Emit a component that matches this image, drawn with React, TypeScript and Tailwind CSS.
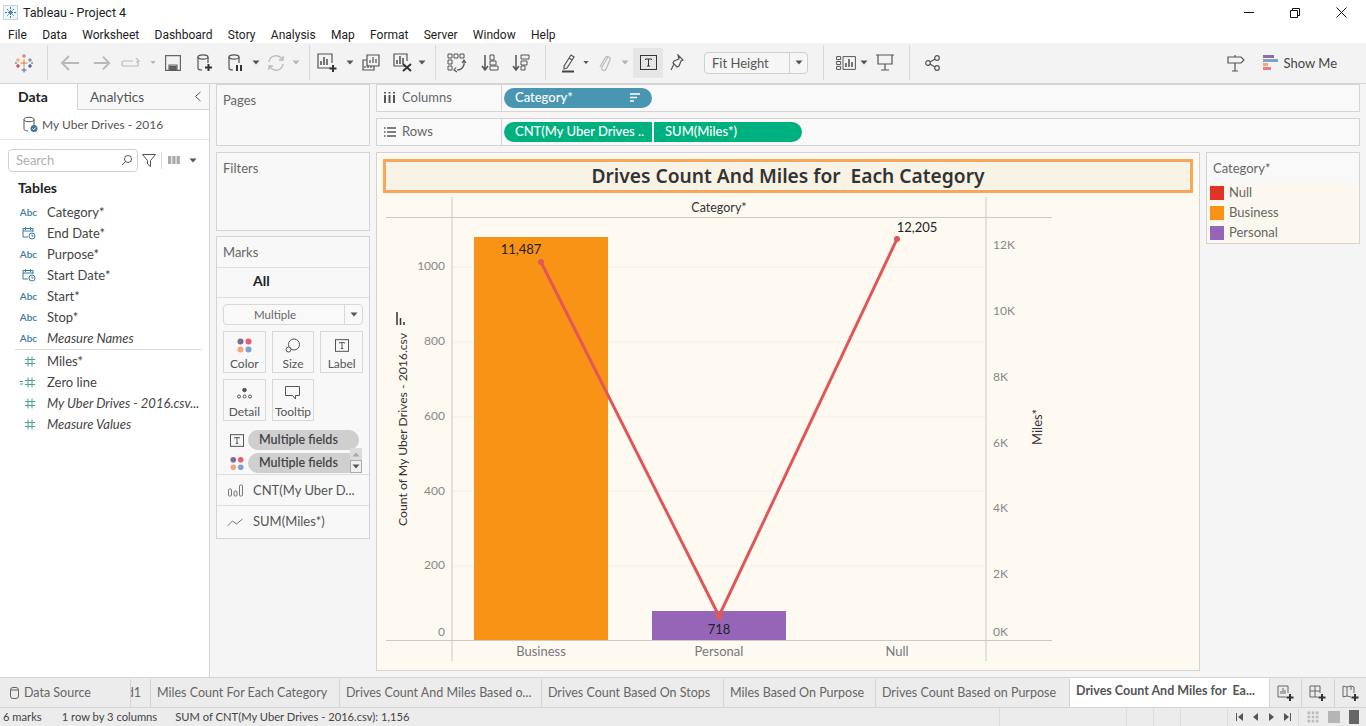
import type { ReactNode } from "react";

// Small drop-down arrow used after many toolbar buttons.
function Caret({ light }: { light?: boolean }) {
  return (
    <svg width="8" height="5" viewBox="0 0 8 5">
      <path d="M0.5 0.5h7L4 4.5z" fill={light ? "#b5b5b5" : "#555"} />
    </svg>
  );
}

function Tool({ w, children }: { w: string; children: ReactNode }) {
  return <div className={`${w} flex h-full shrink-0 items-center justify-center`}>{children}</div>;
}

function Sep({ className = "" }: { className?: string }) {
  return <div className={`h-[35px] w-px shrink-0 bg-[#d8d8d8] ${className}`} />;
}

function Icon({ w = 22, h = 22, children }: { w?: number; h?: number; children: ReactNode }) {
  return (
    <svg width={w} height={h} viewBox={`0 0 ${w} ${h}`} fill="none" stroke="#555" strokeWidth="1.2">
      {children}
    </svg>
  );
}

function TableauLogo() {
  const crosses: [number, number, string, number][] = [
    [10, 10, "#e8762c", 3.5],
    [10, 3, "#e15759", 2],
    [10, 17, "#5b6591", 2.5],
    [4, 7, "#eda247", 2],
    [16, 7, "#59879b", 2],
    [4, 13, "#c72037", 2],
    [16, 13, "#1f447e", 2],
    [2, 10, "#7099a6", 1.2],
    [18, 10, "#7099a6", 1.2],
  ];
  return (
    <svg width="20" height="20" viewBox="0 0 20 20" strokeWidth="1">
      {crosses.map(([x, y, c, r]) => (
        <path key={`${x}-${y}`} d={`M${x - r} ${y}h${2 * r}M${x} ${y - r}v${2 * r}`} stroke={c} fill="none" />
      ))}
    </svg>
  );
}

function Toolbar() {
  return (
    <div className="flex h-[41px] items-center border-b border-[#d4d4d4] bg-[#f3f3f3]">
      <Tool w="w-[47px]"><TableauLogo /></Tool>
      <Sep />
      <Tool w="w-[44px]">
        <Icon><path d="M20 11H3M10 4l-7 7 7 7" stroke="#b9b9b9" strokeWidth="2" /></Icon>
      </Tool>
      <Tool w="w-[20px]">
        <Icon><path d="M2 11h17M12 4l7 7-7 7" stroke="#b9b9b9" strokeWidth="2" /></Icon>
      </Tool>
      <Tool w="w-[38px]">
        <Icon w={20} h={12}>
          <path d="M12 4H3a2 2 0 0 0-2 2v1a2 2 0 0 0 2 2h14V5M15 1l3 3-3 1" stroke="#bbb" />
        </Icon>
      </Tool>
      <Tool w="w-[6px]"><Caret light /></Tool>
      <Tool w="w-[34px]">
        <Icon w={16} h={16}>
          <path d="M0.6 0.6h14.8v14.8H0.6zM4 15v-5h8v5" stroke="#666" />
          <rect x="5" y="11.5" width="6" height="3.5" fill="#666" />
        </Icon>
      </Tool>
      <Tool w="w-[30px]">
        <Icon w={16} h={18}>
          <ellipse cx="6" cy="3" rx="5" ry="2.2" />
          <path d="M1 3v11c0 1.2 2 2 4 2M11 3v6" />
          <path d="M11.5 10v7M8 13.5h7" stroke="#333" strokeWidth="2" />
        </Icon>
      </Tool>
      <Tool w="w-[32px]">
        <Icon w={16} h={18}>
          <ellipse cx="6" cy="3" rx="5" ry="2.2" />
          <path d="M1 3v11c0 1.2 2 2 4 2M11 3v6" />
          <path d="M9 11v6M13 11v6" stroke="#333" strokeWidth="2" />
        </Icon>
      </Tool>
      <Tool w="w-[8px]"><Caret /></Tool>
      <Tool w="w-[32px]">
        <Icon w={18} h={18}>
          <path d="M2 8a7 7 0 0 1 12-4l2 2M16 10a7 7 0 0 1-12 4l-2-2M16 2v4h-4M2 16v-4h4" stroke="#bcbcbc" strokeWidth="1.4" />
        </Icon>
      </Tool>
      <Tool w="w-[8px]"><Caret light /></Tool>
      <Sep className="ml-[9px]" />
      <Tool w="w-[36px]">
        <Icon w={22} h={20}>
          <path d="M14 15H1V1h14v9" />
          <path d="M4 12V8M7 12V4M10 12V6" strokeWidth="1.6" />
          <path d="M16 12v7M12.5 15.5h7" stroke="#333" strokeWidth="2" />
        </Icon>
      </Tool>
      <Tool w="w-[8px]"><Caret /></Tool>
      <Tool w="w-[34px]">
        <Icon w={18} h={17}>
          <path d="M5 1h12v11H5z" />
          <path d="M8 9V6M11 9V3M14 9V5" />
          <path d="M5 6H1v10h11v-4M3 14v-2M6 14v-3M9 14v-2" />
        </Icon>
      </Tool>
      <Tool w="w-[30px]">
        <Icon w={20} h={19}>
          <path d="M12 13H1V1h13v7" />
          <path d="M4 11V7M7 11V3M10 11V5" strokeWidth="1.6" />
          <path d="M10 11l8 7M18 11l-8 7" stroke="#333" strokeWidth="2" />
        </Icon>
      </Tool>
      <Tool w="w-[8px]"><Caret /></Tool>
      <Sep className="ml-[9px]" />
      <Tool w="w-[42px]">
        <Icon w={20} h={20}>
          <path d="M1 1h4v4H1zM7 1h4v4H7zM13 1h4v4h-4zM1 7h4v4H1zM1 13h4v4H1z" strokeWidth="1" />
          <path d="M17 8c1 5-2 9-7 9M9 14.5l-2 2.5 3 2M15 10l2-3 2 3" />
        </Icon>
      </Tool>
      <Tool w="w-[24px]">
        <Icon w={18} h={18}>
          <path d="M4 1v14M1 12l3 4 3-4" strokeWidth="1.5" />
          <path d="M9 1h4v5H9zM9 7h6v4H9zM9 12h8v4H9z" strokeWidth="1" />
        </Icon>
      </Tool>
      <Tool w="w-[38px]">
        <Icon w={18} h={18}>
          <path d="M4 1v14M1 12l3 4 3-4" strokeWidth="1.5" />
          <path d="M9 1h8v4H9zM9 7h6v4H9zM9 12h4v4H9z" strokeWidth="1" />
        </Icon>
      </Tool>
      <Sep className="ml-[5px]" />
      <Tool w="w-[30px] ml-[7px]">
        <Icon w={14} h={20}>
          <path d="M3 13L10 2l3 2-7 11-3 1zM8 5l3 2" />
          <path d="M1 18.5h12" stroke="#444" strokeWidth="2" />
        </Icon>
      </Tool>
      <Tool w="w-[6px]"><Caret /></Tool>
      <Tool w="w-[32px]">
        <Icon w={14} h={19}>
          <path d="M10 4L4 14c-2 3 3 5 4 2l4-9c1-3-3-5-5-2L2 14" stroke="#bcbcbc" strokeWidth="1.3" />
        </Icon>
      </Tool>
      <Tool w="w-[8px]"><Caret light /></Tool>
      <div className="ml-[4px] flex h-[30px] w-[30px] shrink-0 items-center justify-center bg-[#e6e6e6]">
        <TextBox w={17} h={15} />
      </div>
      <Tool w="w-[28px]">
        <Icon w={14} h={17}>
          <path d="M8 1l5 5-2 1-2 5-2 1-4-4 1-2 5-2zM4 10l-3 6" />
        </Icon>
      </Tool>
      <div className="ml-[13px] flex h-[22px] w-[104px] shrink-0 rounded-sm border border-[#cfcfcf] bg-[#f6f6f6] text-[13px] text-[#555]">
        <span className="flex-1 pl-[7px] leading-[20px]">Fit Height</span>
        <span className="flex w-[18px] items-center justify-center border-l border-[#cfcfcf]"><Caret /></span>
      </div>
      <Sep className="ml-[15px]" />
      <Tool w="w-[28px] ml-[8px]">
        <Icon w={20} h={14}>
          <path d="M0.6 0.6h4v3h-4zM0.6 5.5h4v3h-4zM0.6 10.4h4v3h-4zM7 0.6h12.4v12.8H7z" strokeWidth="1" />
          <path d="M10 11V7M13 11V3M16 11V6" strokeWidth="1.6" />
        </Icon>
      </Tool>
      <Tool w="w-[8px]"><Caret /></Tool>
      <Tool w="w-[34px]">
        <Icon w={18} h={17}>
          <path d="M0 1h18M2 1v9h14V1M9 10v6M5 16h8" />
        </Icon>
      </Tool>
      <Sep className="ml-[7px]" />
      <Tool w="w-[44px]">
        <Icon w={15} h={16}>
          <circle cx="3" cy="8" r="2.3" />
          <circle cx="12" cy="3" r="2.3" />
          <circle cx="12" cy="13" r="2.3" />
          <path d="M5 7l5-3M5 9l5 3" />
        </Icon>
      </Tool>
      <div className="flex-1" />
      <Tool w="w-[30px]">
        <Icon w={18} h={18}>
          <path d="M1 3h13l3 3-3 3H1zM8 3V1M8 9v8M5 17h6" />
        </Icon>
      </Tool>
      <div className="ml-[12px] mr-[29px] flex shrink-0 items-center gap-[6px] text-[13px] text-[#444]">
        <svg width="15" height="15" viewBox="0 0 15 15">
          <rect x="0" y="0" width="11" height="3" fill="#8b6f9e" />
          <rect x="0" y="4" width="15" height="3" fill="#7ea2d0" />
          <rect x="0" y="8" width="5" height="3" fill="#f2a96b" />
          <rect x="0" y="12" width="8" height="3" fill="#f0788a" />
        </svg>
        <span className="pt-[1px]">Show Me</span>
      </div>
    </div>
  );
}

function TextBox({ w, h }: { w: number; h: number }) {
  return (
    <svg width={w} height={h} viewBox="0 0 17 15" fill="none" stroke="#333" strokeWidth="1">
      <rect x="0.5" y="0.5" width="16" height="14" />
      <path d="M5.5 5V4h6v1M8.5 4v7M7 11h3" />
    </svg>
  );
}

function ColorDots() {
  return (
    <svg width="15" height="15" viewBox="0 0 15 15">
      <circle cx="3.5" cy="3.5" r="3" fill="#7b6a94" />
      <circle cx="11.5" cy="3.5" r="3" fill="#ea5d6e" />
      <circle cx="3.5" cy="11.5" r="3" fill="#f2a774" />
      <circle cx="11.5" cy="11.5" r="3" fill="#7ea2d0" />
    </svg>
  );
}

type FieldKind = "abc" | "date" | "num" | "calc";

function FieldIcon({ kind }: { kind: FieldKind }) {
  if (kind === "abc") return <span className="text-[10px] font-semibold text-[#3a7a9c]">Abc</span>;
  if (kind === "date") {
    return (
      <svg width="14" height="14" viewBox="0 0 14 14" fill="none" stroke="#3a7a9c" strokeWidth="1">
        <path d="M6 11H1V2.5h10V6M3.5 1v3M8.5 1v3M1 5h10" />
        <circle cx="10" cy="10" r="3" />
        <path d="M10 8.5V10h1.4" />
      </svg>
    );
  }
  return (
    <svg width="17" height="11" viewBox="0 0 17 11" fill="none" stroke="#46a67e" strokeWidth="1">
      {kind === "calc" && <path d="M0 4.5h3M0 7h3" />}
      <path d="M8 0.5v10M12 0.5v10M5 3.5h10M5 7.5h10" />
    </svg>
  );
}

const FIELDS: { name: string; kind: FieldKind; italic?: boolean }[] = [
  { name: "Category*", kind: "abc" },
  { name: "End Date*", kind: "date" },
  { name: "Purpose*", kind: "abc" },
  { name: "Start Date*", kind: "date" },
  { name: "Start*", kind: "abc" },
  { name: "Stop*", kind: "abc" },
  { name: "Measure Names", kind: "abc", italic: true },
  { name: "Miles*", kind: "num" },
  { name: "Zero line", kind: "calc" },
  { name: "My Uber Drives - 2016.csv...", kind: "num", italic: true },
  { name: "Measure Values", kind: "num", italic: true },
];

function DataPane() {
  return (
    <div className="flex w-[210px] shrink-0 flex-col border-r border-[#d4d4d4] bg-white">
      <div className="flex h-[26px] items-stretch">
        <div className="flex w-[77px] items-center pl-[18px] text-[14px] font-bold text-[#222]">Data</div>
        <div className="flex flex-1 items-center justify-between border-b border-l border-[#d4d4d4] bg-[#f8f8f8] pl-[12px] pr-[7px] pt-[1px] text-[13.5px] text-[#555]">
          Analytics
          <svg width="8" height="11" viewBox="0 0 8 11" fill="none" stroke="#555"><path d="M6.5 1L1.5 5.5l5 4.5" /></svg>
        </div>
      </div>
      <div className="flex h-[30px] items-center gap-[3px] border-b border-[#e4e4e4] pl-[22px] pt-[1px] text-[12px] text-[#555]">
        <svg width="17" height="17" viewBox="0 0 17 17" fill="none" stroke="#555">
          <ellipse cx="7" cy="3.5" rx="5" ry="2.2" />
          <path d="M2 3.5V13c0 1.2 2 2 4 2M12 3.500v6" />
          <circle cx="12" cy="12.5" r="3.5" fill="#3a7a9c" stroke="none" />
          <path d="M10.5 12.5l1.2 1.2 2-2.2" stroke="#fff" />
        </svg>
        My Uber Drives - 2016
      </div>
      <div className="flex items-center pl-[8px] pt-[9px]">
        <div className="flex h-[23px] w-[130px] items-center justify-between rounded-sm border border-[#cfcfcf] pl-[7px] pr-[4px] text-[13px] text-[#b0b0b0]">
          Search
          <svg width="12" height="12" viewBox="0 0 12 12" fill="none" stroke="#555"><circle cx="7" cy="5" r="3.5" /><path d="M4.500 7.5L1 11" /></svg>
        </div>
        <svg className="ml-[4px]" width="14" height="13" viewBox="0 0 14 13" fill="none" stroke="#555"><path d="M0.5 0.5h13L8.5 6.500v6l-3-2.500V6.500z" /></svg>
        <div className="ml-[5px] h-[17px] w-px bg-[#d8d8d8]" />
        <svg className="ml-[6px]" width="12" height="9" viewBox="0 0 12 9" stroke="#555" strokeDasharray="3.3 1"><path d="M0 1h12M0 3h12M0 5h12M0 7h12" /></svg>
        <span className="ml-[9px]"><Caret /></span>
      </div>
      <div className="pl-[18px] pt-[5px] text-[14px] font-bold leading-[22px] text-[#222]">Tables</div>
      <div className="mt-[3px] flex flex-col">
        {FIELDS.map((field, i) => (
          <div key={field.name}>
            {i === 7 && <div className="mb-px ml-[15px] mr-[7px] h-px bg-[#dcdcdc]" />}
            <div className="flex h-[21px] items-center text-[13px] text-[#444]">
              <span className="flex w-[47px] shrink-0 justify-center pl-[16px] pr-[6px]"><FieldIcon kind={field.kind} /></span>
              <span className={`whitespace-nowrap ${field.italic ? "italic" : ""}`}>{field.name}</span>
            </div>
          </div>
        ))}
      </div>
    </div>
  );
}

function MarkButton({ label, children }: { label: string; children: ReactNode }) {
  return (
    <div className="flex h-[42px] flex-col items-center justify-between border border-[#d8d8d8] pb-[1px] pt-[5px] text-[12px] leading-[15px] text-[#555]">
      <div className="flex h-[16px] items-center">{children}</div>
      {label}
    </div>
  );
}

function Card({ title, className }: { title: string; className: string }) {
  return (
    <div className={`border border-[#d4d4d4] bg-[#f8f8f8] pl-[6px] pt-[7px] text-[13px] leading-[16px] text-[#666] ${className}`}>
      {title}
    </div>
  );
}

function CardsColumn() {
  return (
    <div className="flex w-[154px] shrink-0 flex-col gap-[5px]">
      <Card title="Pages" className="h-[62px]" />
      <Card title="Filters" className="mt-px h-[79px]" />
      <div className="flex h-[303px] flex-col border border-[#d4d4d4] bg-[#f8f8f8]">
        <div className="h-[31px] border-b border-[#dedede] pl-[6px] pt-[7px] text-[13px] leading-[16px] text-[#666]">Marks</div>
        <div className="flex h-[31px] items-center border-b border-[#dedede] pb-[4px] pl-[36px] text-[14px] font-bold text-[#222]">All</div>
        <div className="mx-[6px] mt-[6px] flex h-[21px] rounded-sm border border-[#d8d8d8] bg-[#f9f9f9] text-[11.5px] text-[#666]">
          <span className="flex-1 pl-[30px] leading-[19px]">Multiple</span>
          <span className="flex w-[18px] items-center justify-center border-l border-[#d8d8d8]"><Caret /></span>
        </div>
        <div className="mx-[6px] mt-[6px] grid grid-cols-3 gap-x-[6px] gap-y-[6px]">
          <MarkButton label="Color"><ColorDots /></MarkButton>
          <MarkButton label="Size">
            <svg width="16" height="15" viewBox="0 0 16 15" fill="none" stroke="#555"><circle cx="9" cy="6.5" r="5.5" /><circle cx="3.5" cy="11.5" r="2.5" fill="#f8f8f8" /></svg>
          </MarkButton>
          <MarkButton label="Label"><TextBox w={14} h={13} /></MarkButton>
          <MarkButton label="Detail">
            <svg width="15" height="11" viewBox="0 0 15 11" fill="none" stroke="#555">
              <circle cx="7.5" cy="2" r="1.8" fill="#555" />
              <circle cx="2" cy="8.5" r="1.5" />
              <circle cx="7.5" cy="8.5" r="1.5" />
              <circle cx="13" cy="8.5" r="1.5" />
            </svg>
          </MarkButton>
          <MarkButton label="Tooltip">
            <svg width="15" height="14" viewBox="0 0 15 14" fill="none" stroke="#555"><path d="M0.5 0.5h14v9h-4v3.5l-3-3.5h-7z" /></svg>
          </MarkButton>
        </div>
        <div className="relative mt-[9px] flex flex-col gap-[3px] pl-[13px]">
          <div className="flex items-center gap-[4px]">
            <span className="flex w-[14px] justify-center"><TextBox w={14} h={13} /></span>
            <span className="h-[20px] w-[111px] rounded-full bg-[#cfcfcf] pl-[11px] text-[12.5px] font-semibold leading-[20px] text-[#444]">Multiple fields</span>
          </div>
          <div className="flex items-center gap-[4px]">
            <span className="flex w-[14px] justify-center"><ColorDots /></span>
            <span className="h-[20px] w-[111px] rounded-full bg-[#cfcfcf] pl-[11px] text-[12.5px] font-semibold leading-[20px] text-[#444]">Multiple fields</span>
          </div>
          {/* tiny scroller sits over the pills */}
          <div className="absolute right-[7px] top-[18px] flex h-[25px] w-[12px] flex-col bg-[#dcdcdc]">
            <span className="flex h-[12px] items-center justify-center">
              <svg width="8" height="5" viewBox="0 0 8 5"><path d="M0.5 4.5h7L4 0.5z" fill="#aaa" /></svg>
            </span>
            <span className="flex h-[13px] items-center justify-center border border-[#aaa] bg-[#f0f0f0]"><Caret /></span>
          </div>
        </div>
        <div className="mt-[1px] flex h-[32px] items-center border-b border-t border-[#dedede] text-[13px] text-[#555]">
          <span className="flex w-[36px] justify-center">
            <svg width="15" height="13" viewBox="0 0 15 13" fill="none" stroke="#777"><rect x="0.5" y="5" width="3" height="7" rx="1" /><rect x="6" y="7" width="3" height="5" rx="1" /><rect x="11.5" y="1" width="3" height="11" rx="1" /></svg>
          </span>
          CNT(My Uber D...
        </div>
        <div className="flex h-[32px] items-center text-[13px] text-[#555]">
          <span className="flex w-[36px] justify-center">
            <svg width="16" height="9" viewBox="0 0 16 9" fill="none" stroke="#777"><path d="M0.5 8l5-5 4 3 6-5" /></svg>
          </span>
          SUM(Miles*)
        </div>
      </div>
    </div>
  );
}

function Shelf({ label, icon, children }: { label: string; icon: ReactNode; children: ReactNode }) {
  return (
    <div className="flex h-[28px] border border-[#d4d4d4] bg-[#f9f9f9]">
      <div className="flex w-[125px] shrink-0 items-center gap-[6px] border-r border-[#d4d4d4] pl-[6px] text-[13px] text-[#666]">
        <span className="flex w-[13px] justify-center">{icon}</span>
        {label}
      </div>
      <div className="flex items-center gap-[2px] pl-[2px] text-[13px] font-medium text-white">{children}</div>
    </div>
  );
}

function Chart() {
  const left: [string, number][] = [["1000", 270], ["800", 345], ["600", 420], ["400", 495], ["200", 569], ["0", 636]];
  const right: [string, number][] = [["12K", 249], ["10K", 315], ["8K", 381], ["6K", 447], ["4K", 512], ["2K", 578], ["0K", 636]];
  return (
    <svg width="822" height="477" viewBox="377 193 822 477" className="block text-[12px]">
      {[267, 342, 417, 491, 566].map((y) => (
        <path key={y} d={`M452 ${y}H986`} stroke="#f4efe8" />
      ))}
      <rect x="474" y="237" width="134" height="403" fill="#f99316" />
      <rect x="652" y="611" width="134" height="29" fill="#9566b8" />
      <path d="M452 197V661M986 197V661M386 217.5H1052M386 640.5H1052" stroke="#cdc9c3" />
      <path d="M541 262L719 616L897 239" fill="none" stroke="#e15759" strokeWidth="3" />
      <circle cx="541" cy="262" r="3" fill="#e15759" />
      <circle cx="719" cy="616" r="3.5" fill="#e15759" />
      <circle cx="897" cy="239" r="3" fill="#e15759" />
      <text x="719" y="212" textAnchor="middle" fill="#333" fontSize="12.5">Category*</text>
      <text x="521" y="254" textAnchor="middle" fill="#222" fontSize="13">11,487</text>
      <text x="719" y="634" textAnchor="middle" fill="#222" fontSize="13">718</text>
      <text x="917" y="232" textAnchor="middle" fill="#222" fontSize="13">12,205</text>
      {left.map(([t, y]) => (
        <text key={t} x="445" y={y} textAnchor="end" fill="#888">{t}</text>
      ))}
      {right.map(([t, y]) => (
        <text key={t} x="993" y={y} fill="#888">{t}</text>
      ))}
      {[["Business", 541], ["Personal", 719], ["Null", 897]].map(([t, x]) => (
        <text key={t} x={x} y="656" textAnchor="middle" fill="#777" fontSize="13">{t}</text>
      ))}
      <text transform="translate(407 526) rotate(-90)" fill="#333" fontSize="12.2">Count of My Uber Drives - 2016.csv</text>
      <path d="M397 325V312M400.5 325V318M404 325V322" stroke="#333" strokeWidth="1.5" />
      <text transform="translate(1042 445) rotate(-90)" fill="#333" fontSize="13">Miles*</text>
    </svg>
  );
}

function Worksheet() {
  return (
    <div className="h-[519px] flex-1 border border-[#d4d4d4] bg-[#fefaf2] px-[6px] pt-[6px]">
      <div className="flex h-[34px] items-center justify-center whitespace-pre border-[3px] border-[#f9a55a] bg-[#f9f3e6] pt-[1px] text-[19.2px] font-semibold text-[#333] [font-family:'Noto_Sans',sans-serif]">
        Drives Count And Miles for  Each Category
      </div>
      <div className="-mx-[6px]"><Chart /></div>
    </div>
  );
}

function Legend() {
  const items = [
    ["Null", "bg-[#e03426]"],
    ["Business", "bg-[#f99316]"],
    ["Personal", "bg-[#9566b8]"],
  ];
  return (
    <div className="h-[92px] w-[154px] shrink-0 border border-[#d4d4d4] bg-[#fdf8ef]">
      <div className="h-[30px] bg-[#f9f9f9] pl-[6px] pt-[7px] text-[13px] leading-[16px] text-[#666]">Category*</div>
      <div className="flex flex-col gap-[6px] pl-[3px] pt-[3px]">
        {items.map(([name, color]) => (
          <div key={name} className="flex h-[14px] items-center gap-[5px] text-[13px] text-[#666]">
            <span className={`h-[14px] w-[14px] ${color}`} />
            {name}
          </div>
        ))}
      </div>
    </div>
  );
}

const TABS: [string, string][] = [
  ["Miles Count For Each Category", "w-[189px]"],
  ["Drives Count And Miles Based o...", "w-[202px]"],
  ["Drives Count Based On Stops", "w-[182px]"],
  ["Miles Based On Purpose", "w-[152px]"],
  ["Drives Count Based on Purpose", "w-[194px]"],
];

function Tabs() {
  return (
    <div className="flex h-[31px] border-b border-t border-[#d4d4d4] bg-[#ececec] pt-[1px] text-[12.5px] text-[#666]">
      <div className="flex w-[130px] shrink-0 items-center gap-[5px] pl-[10px]">
        <svg width="9" height="12" viewBox="0 0 9 12" fill="none" stroke="#666"><rect x="0.5" y="0.5" width="8" height="11" rx="2.5" /><path d="M0.5 3h8" /></svg>
        Data Source
      </div>
      <div className="flex w-[21px] shrink-0 items-center justify-end overflow-hidden whitespace-nowrap border-l border-r border-[#d4d4d4] pr-[9px]">d1</div>
      {TABS.map(([name, width]) => (
        <div key={name} className={`flex shrink-0 items-center border-r border-[#d4d4d4] pl-[6px] ${width}`}>{name}</div>
      ))}
      <div className="-mt-px flex w-[199px] shrink-0 items-center whitespace-pre bg-white pb-[2px] pl-[6px] font-bold text-[#555]">Drives Count And Miles for  Ea...</div>
      <div className="flex flex-1">
        {[0, 1, 2].map((i) => (
          <div key={i} className="flex flex-1 items-center justify-center border-l border-[#d4d4d4]">
            <svg width="17" height="17" viewBox="0 0 17 17" fill="none" stroke="#666">
              {i === 0 && <path d="M9 12H1V1h10v7M4 9V6M6 9V3M8 9V5" />}
              {i === 1 && <path d="M9 12H1V1h10v7M6 1v11M1 6h10" />}
              {i === 2 && <path d="M9 12l-4-1-4 1V1l4 1 4-1 3 1v6M5 2v9M9 1v4" />}
              <path d="M13 9v7M9.5 12.5h7" stroke="#333" strokeWidth="2" />
            </svg>
          </div>
        ))}
      </div>
    </div>
  );
}

function StatusBar() {
  return (
    <div className="flex h-[18px] items-center bg-[#ececec] pl-[3px] text-[11.2px] text-[#444]">
      <span>6 marks</span>
      <span className="ml-[20px]">1 row by 3 columns</span>
      <span className="ml-[18px]">SUM of CNT(My Uber Drives - 2016.csv): 1,156</span>
      <div className="ml-auto flex h-full items-center">
        <div className="h-full w-px bg-[#dcdcdc]" />
        <div className="w-[126px]" />
        <div className="h-full w-px bg-[#dcdcdc]" />
        <div className="w-[26px]" />
        <div className="h-full w-px bg-[#dcdcdc]" />
        <div className="w-[26px]" />
        <div className="h-full w-px bg-[#dcdcdc]" />
        <div className="w-[46px]" />
        <div className="h-full w-px bg-[#dcdcdc]" />
        <div className="flex w-[70px] items-center justify-center gap-[9px]">
          <svg width="55" height="8" viewBox="0 0 55 8" fill="#555">
            <path d="M0 0h1v8H0zM7 0v8L2 4zM22 0v8l-5-4zM33 0v8l5-4zM48 0v8l5-4zM54 0h1v8h-1z" />
          </svg>
        </div>
        <div className="h-full w-px bg-[#dcdcdc]" />
        <div className="flex w-[67px] items-center gap-[9px] pl-[8px]">
          <svg width="12" height="12" viewBox="0 0 12 12" fill="#bbb" stroke="#ececec" strokeWidth="1">
            <path d="M0 0h4v4H0zM4 0h4v4H4zM8 0h4v4H8zM0 4h4v4H0zM4 4h4v4H4zM8 4h4v4H8zM0 8h4v4H0zM4 8h4v4H4zM8 8h4v4H8z" />
          </svg>
          <span className="h-[12px] w-[12px] bg-[#b5b5b5]" />
          <span className="h-[14px] w-[10px] bg-[#666]" />
        </div>
      </div>
    </div>
  );
}

export default function App() {
  return (
    <div className="flex h-[726px] w-[1366px] flex-col overflow-hidden bg-[#f5f5f5] [font-family:Lato,sans-serif]">
      <div className="flex h-[26px] items-center bg-white text-[12.5px] text-[#222] [font-family:Roboto,sans-serif]">
        <svg className="ml-[3px] mr-[5px]" width="15" height="15" viewBox="0 0 15 15" fill="none" stroke="#3a7ea8">
          <rect x="0.5" y="0.5" width="14" height="14" fill="#eef5f9" stroke="#c3d7e2" />
          <path d="M7.5 2v11M2 7.5h11M4 4l7 7M11 4l-7 7" strokeDasharray="2 1" />
        </svg>
        <span>Tableau - Project 4</span>
        <div className="ml-auto mr-[2px] flex h-full items-center">
          <span className="flex w-[46px] justify-center">
            <svg width="10" height="1"><path d="M0 0.5h10" stroke="#111" /></svg>
          </span>
          <span className="flex w-[46px] justify-center">
            <svg width="10" height="10" viewBox="0 0 10 10" fill="none" stroke="#111"><path d="M0.5 2.5h7v7h-7zM2.5 2.5v-2h7v7h-2" /></svg>
          </span>
          <span className="flex w-[46px] justify-center">
            <svg width="11" height="11" viewBox="0 0 11 11" stroke="#111"><path d="M0.5 0.5l10 10M10.5 0.5l-10 10" /></svg>
          </span>
        </div>
      </div>
      <div className="flex h-[17px] items-start gap-[15.3px] bg-white pl-[8px] pt-[1px] text-[12px] leading-[16px] text-[#222] [font-family:Roboto,sans-serif]">
        {["File", "Data", "Worksheet", "Dashboard", "Story", "Analysis", "Map", "Format", "Server", "Window", "Help"].map((m) => (
          <span key={m}>{m}</span>
        ))}
      </div>
      <Toolbar />
      <div className="flex h-[594px]">
        <DataPane />
        <div className="flex flex-1 gap-[6px] px-[6px]">
          <CardsColumn />
          <div className="flex flex-1 flex-col gap-[6px]">
            <Shelf
              label="Columns"
              icon={<svg width="11" height="11" viewBox="0 0 11 11" stroke="#555" strokeWidth="2"><path d="M1 3v8M5.5 3v8M10 3v8M1 0v1.5M5.5 0v1.5M10 0v1.5" /></svg>}
            >
              <div className="flex h-[20px] w-[148px] items-center justify-between rounded-full bg-[#4996b2] pl-[11px] pr-[12px]">
                Category*
                <svg width="10" height="9" viewBox="0 0 10 9" stroke="#fff" strokeWidth="1.5"><path d="M0 1h10M0 4.5h7M0 8h4" /></svg>
              </div>
            </Shelf>
            <Shelf
              label="Rows"
              icon={<svg width="12" height="10" viewBox="0 0 12 10" stroke="#555" strokeWidth="1.5"><path d="M0 1h1.5M3 1h9M0 5h1.5M3 5h9M0 9h1.5M3 9h9" /></svg>}
            >
              <div className="flex h-[20px] w-[148px] items-center rounded-l-full bg-[#00b180] pl-[11px]">CNT(My Uber Drives ..</div>
              <div className="flex h-[20px] w-[148px] items-center rounded-r-full bg-[#00b180] pl-[11px]">SUM(Miles*)</div>
            </Shelf>
            <div className="flex gap-[6px]">
              <Worksheet />
              <Legend />
            </div>
          </div>
        </div>
      </div>
      <Tabs />
      <StatusBar />
    </div>
  );
}
